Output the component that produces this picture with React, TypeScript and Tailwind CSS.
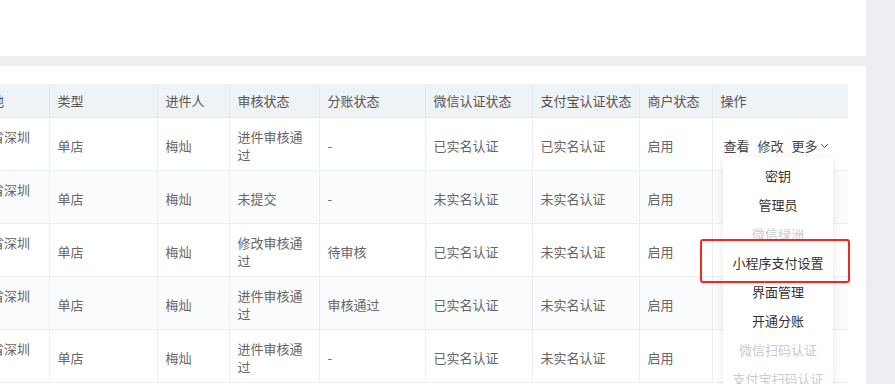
import React from 'react';

interface Row {
  region: string;
  type: string;
  owner: string;
  audit: string;
  split: string;
  wechat: string;
  alipay: string;
  status: string;
}

const rows: Row[] = [
  { region: '中国广东省深圳市南山区', type: '单店', owner: '梅灿', audit: '进件审核通过', split: '-', wechat: '已实名认证', alipay: '已实名认证', status: '启用' },
  { region: '中国广东省深圳市南山区', type: '单店', owner: '梅灿', audit: '未提交', split: '-', wechat: '未实名认证', alipay: '未实名认证', status: '启用' },
  { region: '中国广东省深圳市南山区', type: '单店', owner: '梅灿', audit: '修改审核通过', split: '待审核', wechat: '已实名认证', alipay: '未实名认证', status: '启用' },
  { region: '中国广东省深圳市南山区', type: '单店', owner: '梅灿', audit: '进件审核通过', split: '审核通过', wechat: '已实名认证', alipay: '未实名认证', status: '启用' },
  { region: '中国广东省深圳市南山区', type: '单店', owner: '梅灿', audit: '进件审核通过', split: '-', wechat: '已实名认证', alipay: '未实名认证', status: '启用' },
];

const headers = ['商户所在地', '类型', '进件人', '审核状态', '分账状态', '微信认证状态', '支付宝认证状态', '商户状态', '操作'];
const widths = [118, 108, 72, 90, 106, 107, 107, 73, 136];

// dropdown entries for "更多"; disabled ones are greyed out
const menu = [
  { label: '密钥', disabled: false },
  { label: '管理员', disabled: false },
  { label: '微信绿洲', disabled: true },
  { label: '小程序支付设置', disabled: false },
  { label: '界面管理', disabled: false },
  { label: '开通分账', disabled: false },
  { label: '微信扫码认证', disabled: true },
  { label: '支付宝扫码认证', disabled: true },
];

const ChevronDown = () => (
  <svg width="9" height="6" viewBox="0 0 9 6" className="ml-[2px]">
    <path d="M1 1l3.5 3.5L8 1" fill="none" stroke="#555" strokeWidth="1" />
  </svg>
);

const App: React.FC = () => {
  return (
    <div className="relative flex h-[384px] w-[895px] overflow-hidden bg-[#eceef2] font-['Noto_Sans_CJK_SC',sans-serif] text-[13px]">
      <div className="flex w-[866px] flex-col gap-[10px]">
        <div className="h-[56px] shrink-0 bg-white" />
        <div className="flex-1 overflow-hidden bg-white pr-[18px] pt-[18px]">
          <div className="overflow-hidden">
            <table className="ml-[-69px] table-fixed border-collapse" style={{ width: widths.reduce((a, b) => a + b, 0) }}>
              <colgroup>
                {widths.map((w, i) => (
                  <col key={i} style={{ width: w }} />
                ))}
              </colgroup>
              <thead>
                <tr className="bg-[#f0f3f6]">
                  {headers.map((h) => (
                    <th
                      key={h}
                      className="whitespace-nowrap border-b border-r border-[#e6e9ee] px-[8px] py-[8px] text-left font-normal leading-[17px] text-[#555] last:border-r-0"
                    >
                      {h}
                    </th>
                  ))}
                </tr>
              </thead>
              <tbody>
                {rows.map((r, i) => (
                  <tr key={i} className={i % 2 === 1 ? 'bg-[#fafbfc]' : 'bg-white'}>
                    <td className="border-b border-r border-[#ebeef2] px-[8px] pb-[6px] pt-[10px] align-top leading-[18px] text-[#666]">{r.region}</td>
                    {[r.type, r.owner, r.audit, r.split, r.wechat, r.alipay, r.status].map((v, j) => (
                      <td key={j} className="border-b border-r border-[#ebeef2] px-[8px] pb-[6px] pt-[10px] align-middle leading-[18px] text-[#666]">
                        {v}
                      </td>
                    ))}
                    <td className="border-b border-[#ebeef2] pb-[6px] pl-[11px] pt-[10px] align-middle leading-[18px] text-[#444]">
                      {i === 0 && (
                        <div className="flex items-center gap-[8px]">
                          <span>查看</span>
                          <span>修改</span>
                          <span className="flex items-center">
                            更多
                            <ChevronDown />
                          </span>
                        </div>
                      )}
                    </td>
                  </tr>
                ))}
              </tbody>
            </table>
          </div>
        </div>
      </div>
      <div className="flex-1" />

      {/* dropdown opened from 更多 */}
      <div className="absolute left-[723px] top-[157px] w-[110px] rounded-[4px] bg-white pt-[4px] shadow-[0_2px_10px_rgba(0,0,0,0.1)]">
        {menu.map((m) => (
          <div
            key={m.label}
            className={`flex h-[29px] items-center justify-center ${m.disabled ? 'text-[#c8cbd0]' : 'text-[#333]'}`}
          >
            {m.label}
          </div>
        ))}
      </div>

      {/* red annotation box */}
      <div className="pointer-events-none absolute left-[700px] top-[239px] h-[44px] w-[150px] rounded-[3px] border-2 border-[#f5261c]" />
    </div>
  );
};

export default App;
